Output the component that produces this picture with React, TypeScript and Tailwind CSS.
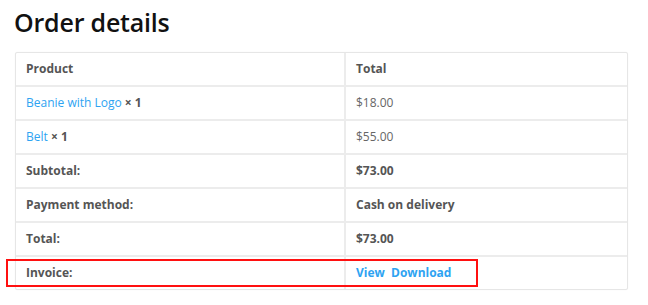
const rows: { label: React.ReactNode; value: React.ReactNode; head?: boolean }[] = [
  { label: "Product", value: "Total", head: true },
  {
    label: (
      <span>
        <span className="text-[#2ea3f2]">Beanie with Logo</span>{" "}
        <strong className="font-bold text-[#555]">× 1</strong>
      </span>
    ),
    value: <span className="text-[#666]">$18.00</span>,
  },
  {
    label: (
      <span>
        <span className="text-[#2ea3f2]">Belt</span>{" "}
        <strong className="font-bold text-[#555]">× 1</strong>
      </span>
    ),
    value: <span className="text-[#666]">$55.00</span>,
  },
  { label: "Subtotal:", value: "$73.00", head: true },
  { label: "Payment method:", value: "Cash on delivery", head: true },
  { label: "Total:", value: "$73.00", head: true },
  {
    label: "Invoice:",
    value: (
      <span className="font-bold text-[#2ea3f2]">
        View&nbsp;&nbsp;Download
      </span>
    ),
    head: true,
  },
];

export default function App() {
  return (
    <div
      className="w-[648px] h-[305px] bg-white overflow-hidden"
      style={{ fontFamily: '"Open Sans", sans-serif' }}
    >
      <h1 className="pl-[14px] pt-[2px] text-[25px] leading-[40px] text-[#111] font-semibold tracking-[-0.2px]">
        Order details
      </h1>
      <div className="relative ml-[15px] mt-[10px] w-[613px]">
        <div className="border border-[#e6e6e6] rounded-[2px] shadow-[0_0_1px_rgba(0,0,0,0.08)]">
          {rows.map((row, i) => (
            <div
              key={i}
              className={`grid grid-cols-[330px_1fr] text-[12px] ${
                i > 0 ? "h-[34px] border-t-2 border-[#ececec]" : "h-[32px]"
              }`}
            >
              <div
                className={`flex items-center pl-[10px] border-r-2 border-[#ececec] ${
                  row.head ? "font-bold text-[#555]" : "text-[#666]"
                }`}
              >
                {row.label}
              </div>
              <div
                className={`flex items-center pl-[10px] ${
                  row.head ? "font-bold text-[#555]" : "text-[#666]"
                }`}
              >
                {row.value}
              </div>
            </div>
          ))}
        </div>
        <div className="absolute left-[-9px] top-[207px] w-[472px] h-[28px] border-2 border-[#ff1010]" />
      </div>
    </div>
  );
}
